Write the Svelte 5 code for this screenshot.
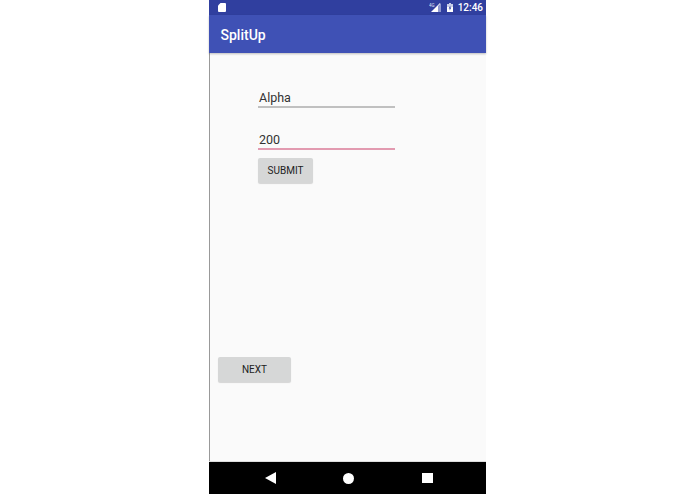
<script>
  const fields = [
    { value: "Alpha", active: false },
    { value: "200", active: true },
  ];
</script>

<div class="phone">
  <div class="status">
    <svg width="8" height="9" viewBox="0 0 8 9">
      <path d="M2.500 0H7a1 1 0 0 1 1 1v7a1 1 0 0 1-1 1H1a1 1 0 0 1-1-1V2.500z" fill="#fff" />
    </svg>
    <div class="status-right">
      <svg width="12" height="9" viewBox="0 0 12 9">
        <text x="0" y="3.500" font-size="4.500" font-family="Roboto" fill="#dfe2f2">4G</text>
        <path d="M11 0v9H2z" fill="#fff" />
        <path d="M9 3v6h3V0z" fill="#8e97cf" />
      </svg>
      <svg width="6" height="9" viewBox="0 0 6 9">
        <path d="M2 0h2v1h2v8H0V1h2z" fill="#c9cee8" />
        <path d="M0 4h6v5H0z" fill="#fff" />
        <path d="M3.300 2.500 1.700 5.500h1v2L4.300 4.500h-1z" fill="#303f9f" />
      </svg>
      <span class="clock">12:46</span>
    </div>
  </div>
  <div class="toolbar">SplitUp</div>

  <div class="content">
    <div class="form">
      {#each fields as field}
        <div class="field" class:active={field.active}>{field.value}</div>
      {/each}
      <button class="btn submit">SUBMIT</button>
    </div>
    <button class="btn next">NEXT</button>
  </div>

  <div class="nav">
    <svg width="11" height="12" viewBox="0 0 11 12"><path d="M11 0v12L0 6z" fill="#fff" /></svg>
    <svg width="11" height="11" viewBox="0 0 11 11"><circle cx="5.500" cy="5.500" r="5.500" fill="#fff" /></svg>
    <svg class="recents" width="11" height="10" viewBox="0 0 11 10"><path d="M0 0h11v10H0z" fill="#fff" /></svg>
  </div>
</div>

<style>
  :global(body) {
    background: #fff;
    font-family: Roboto, "Liberation Sans", sans-serif;
  }

  .phone {
    width: 277px;
    height: 494px;
    margin-left: 209px;
    display: flex;
    flex-direction: column;
    background: #fafafa;
    box-shadow: inset 1px 0 0 #999;
  }

  .status {
    height: 15px;
    background: #303f9f;
    display: flex;
    align-items: center;
    justify-content: space-between;
    padding: 0 3px 0 8.500px;
    color: #fff;
  }

  .status-right {
    display: flex;
    align-items: center;
    gap: 6px;
  }

  .clock {
    font-size: 10px;
    font-weight: 500;
    margin-left: -1px;
  }

  .toolbar {
    height: 36px;
    background: #3f51b5;
    color: #fff;
    font-size: 14px;
    font-weight: 500;
    line-height: 36px;
    padding: 2px 0 0 11.500px;
    box-shadow: 0 1px 2px rgba(0, 0, 0, 0.25);
    position: relative;
  }

  .content {
    flex: 1;
    padding: 0 0 0 9px;
  }

  .form {
    padding: 33px 0 0 40px;
  }

  .field {
    width: 137px;
    height: 22px;
    box-sizing: border-box;
    border-bottom: 2px solid #c0c0c0;
    margin-bottom: 20px;
    padding-left: 1px;
    font-size: 12.500px;
    line-height: 23px;
    color: #333;
  }

  .field.active {
    border-bottom-color: #e29ab0;
    margin-bottom: 8px;
  }

  .btn {
    display: block;
    border: 0;
    border-radius: 2px;
    background: #d6d7d7;
    box-shadow: 0 1px 1px rgba(0, 0, 0, 0.15);
    color: #222;
    font-family: Roboto, "Liberation Sans", sans-serif;
    font-size: 10px;
    font-weight: 400;
    padding: 0;
  }

  .submit {
    width: 55px;
    height: 25px;
  }

  .next {
    width: 73px;
    height: 25px;
    margin-top: 174px;
  }

  .nav {
    height: 32px;
    background: #000;
    display: flex;
    align-items: center;
    box-shadow: 0 -1px 0 #ddd;
    padding-left: 56px;
    gap: 67px;
  }

  .recents {
    margin-left: 1px;
  }
</style>
